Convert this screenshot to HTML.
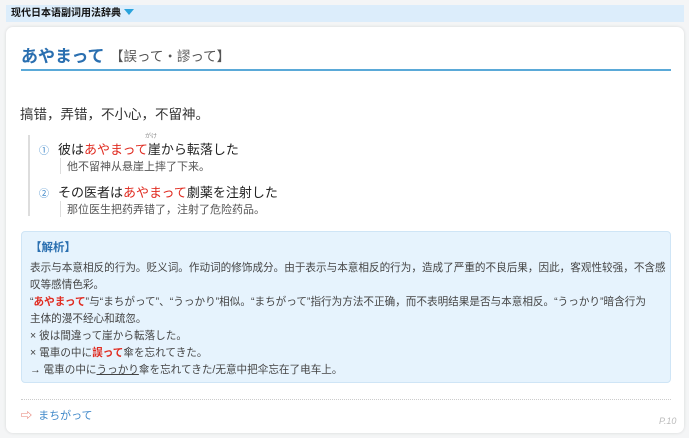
<!DOCTYPE html>
<html><head><meta charset="utf-8"><style>
*{margin:0;padding:0;box-sizing:border-box}
body{width:689px;height:438px;background:#f4f5f6;font-family:"Liberation Sans","Noto Sans CJK SC",sans-serif;position:relative;overflow:hidden;color:#333}
.hdr{position:absolute;left:6px;top:5px;width:678px;height:17px;background:#dcedfb;font-size:10px;font-weight:bold;color:#111;padding-left:5px;line-height:17px}
.tri{display:inline-block;width:0;height:0;border-left:5px solid transparent;border-right:5px solid transparent;border-top:6px solid #29a3dc;margin-left:3px;vertical-align:1px}
.card{position:absolute;left:6px;top:27px;width:678px;height:406px;background:#fff;border-radius:7px;box-shadow:0 0 3px rgba(0,0,0,.12)}
.abs{position:absolute;white-space:nowrap}
.red{color:#e02b20}
.box{position:absolute;left:15px;top:204px;width:650px;height:152px;background:#e6f3fd;border:1px solid #cfe5f6;border-radius:4px;padding:8px 0 0 8px;font-size:10.6px;line-height:17px;color:#444;white-space:nowrap}
</style></head><body>
<div class="hdr">现代日本语副词用法辞典<span class="tri"></span></div>
<div class="card">
<div class="abs" style="left:15px;top:15px;font-size:17px;color:#2a6fb0;font-weight:bold">あやまって</div>
<div class="abs" style="left:104px;top:18px;font-size:13.5px;color:#555">【誤って・謬って】</div>
<div class="abs" style="left:15px;top:42px;width:650px;height:2px;background:#5aa9d8"></div>
<div class="abs" style="left:14px;top:76px;font-size:13.5px;color:#333">搞错，弄错，不小心，不留神。</div>
<div class="abs" style="left:22px;top:108px;width:2px;height:81px;background:#ddd"></div>
<div class="abs" style="left:33px;top:115px;font-size:10px;color:#3f88c9">①</div>
<div class="abs" style="left:52px;top:112px;font-size:13px;color:#222">彼は<span class="red">あやまって</span>崖から転落した</div>
<div class="abs" style="left:139px;top:104px;font-size:6px;color:#888">がけ</div>
<div class="abs" style="left:54px;top:131px;width:1px;height:16px;background:#ddd"></div>
<div class="abs" style="left:61px;top:131px;font-size:11px;color:#555">他不留神从悬崖上摔了下来。</div>
<div class="abs" style="left:33px;top:158px;font-size:10px;color:#3f88c9">②</div>
<div class="abs" style="left:52px;top:155px;font-size:13px;color:#222">その医者は<span class="red">あやまって</span>劇薬を注射した</div>
<div class="abs" style="left:54px;top:174px;width:1px;height:16px;background:#ddd"></div>
<div class="abs" style="left:61px;top:174px;font-size:11px;color:#555">那位医生把药弄错了，注射了危险药品。</div>
<div class="box">
<div style="color:#2a6fb0;font-weight:bold;font-size:11.5px;margin-bottom:3px">【解析】</div>
<div>表示与本意相反的行为。贬义词。作动词的修饰成分。由于表示与本意相反的行为，造成了严重的不良后果，因此，客观性较强，不含感<br>叹等感情色彩。<br>“<b class="red">あやまって</b>”与“まちがって”、“うっかり”相似。“まちがって”指行为方法不正确，而不表明结果是否与本意相反。“うっかり”暗含行为<br>主体的漫不经心和疏忽。<br>× 彼は間違って崖から転落した。<br>× 電車の中に<b class="red">誤って</b>傘を忘れてきた。<br>→ 電車の中に<u>うっかり</u>傘を忘れてきた/无意中把伞忘在了电车上。</div>
</div>
<div class="abs" style="left:15px;top:372px;width:650px;border-top:1px dotted #ccc"></div>
<div class="abs" style="left:15px;top:380px;font-size:11px;color:#3f88c9"><span style="color:#e05a4a">⇨</span>&nbsp; まちがって</div>
<div class="abs" style="left:653px;top:389px;font-size:9px;color:#bbb;font-style:italic">P.10</div>
</div>
</body></html>
